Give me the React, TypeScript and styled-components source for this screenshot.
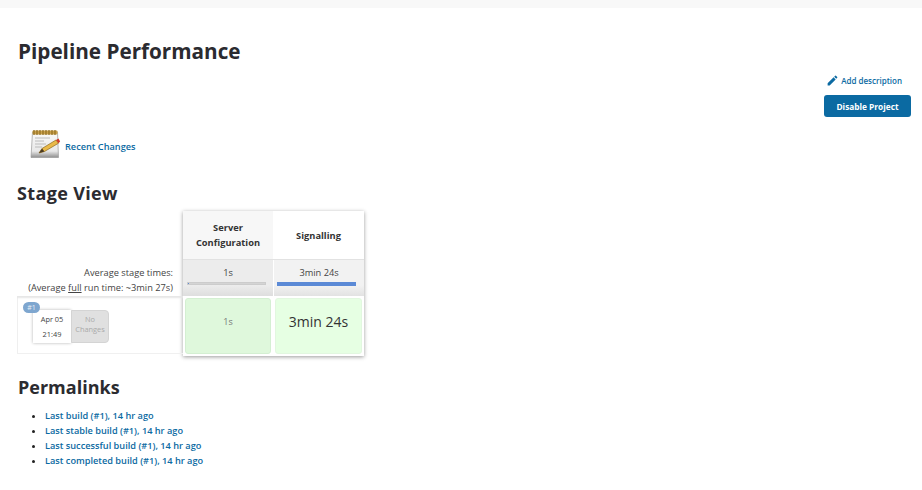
import styled, { createGlobalStyle } from "styled-components";

const Global = createGlobalStyle`
  html, body {
    margin: 0;
    padding: 0;
    background: #fff;
  }
  body {
    font-family: "Open Sans", "Noto Sans", "Liberation Sans", sans-serif;
    color: #333;
    height: 490px;
    overflow: hidden;
  }
`;

// <styled>
const TopBar = styled.div`
  height: 8px;
  background: #f8f8f8;
`;

const Page = styled.div`
  padding: 0 11px 0 18px;
`;

const Title = styled.h1`
  margin: 0;
  padding-top: 28px;
  height: 30px;
  line-height: 30px;
  font-size: 20.7px;
  font-weight: 700;
  color: #2b2b30;
`;

const Actions = styled.div`
  display: flex;
  flex-direction: column;
  align-items: flex-end;
  margin-top: 4px;
`;

const AddLink = styled.a`
  display: flex;
  align-items: center;
  gap: 2px;
  height: 20px;
  margin-right: 9px;
  font-size: 8px;
  font-weight: 600;
  color: #0b6aa2;
`;

const DisableButton = styled.button`
  width: 87px;
  height: 22px;
  margin-top: 5px;
  padding: 0;
  border: 0;
  border-radius: 3px;
  background: #0b6aa2;
  color: #fff;
  font-family: inherit;
  font-size: 8.3px;
  font-weight: 700;
`;

const RecentRow = styled.div`
  display: flex;
  align-items: center;
  gap: 1px;
  margin: 12px 0 0 12px;
  height: 34px;
`;

const BlueLink = styled.a`
  font-size: 9.2px;
  font-weight: 600;
  color: #0b6aa2;
`;

const SectionTitle = styled.h2`
  margin: 0;
  height: 26px;
  line-height: 26px;
  font-size: 18px;
  font-weight: 700;
  color: #2b2b30;
`;

const StageTitle = styled(SectionTitle)`
  margin: 17px 0 0 -1px;
  letter-spacing: 0.35px;
`;

const Stage = styled.div`
  display: flex;
  margin: 5px 0 0 -1px;
`;

const LeftCol = styled.div`
  width: 166px;
  display: flex;
  flex-direction: column;
`;

const AverageLabel = styled.div`
  margin-top: 54px;
  height: 30px;
  padding-right: 10px;
  text-align: right;
  font-size: 9.25px;
  line-height: 15px;
  color: #444;
  white-space: nowrap;
  u {
    text-decoration: underline;
  }
`;

const BuildRow = styled.div`
  position: relative;
  height: 58px;
  margin-top: 1px;
  border-bottom: 1px solid #f0f0f0;
  background: linear-gradient(to right, #f0f0f0 1px, transparent 1px);
  box-shadow: inset 0 3px 2px -1px #e6e6e6;
  display: flex;
  align-items: flex-start;
  padding: 14px 0 0 16px;
  box-sizing: border-box;
`;

const BuildBadge = styled.span`
  position: absolute;
  left: 6px;
  top: 6px;
  width: 17px;
  height: 11px;
  border-radius: 6px;
  background: #7ea6cf;
  color: #e8eef5;
  font-size: 7px;
  line-height: 11px;
  text-align: center;
`;

const DateCard = styled.div`
  width: 38px;
  height: 33px;
  background: #fff;
  box-shadow: 0 0 3px rgba(0, 0, 0, 0.3);
  font-size: 7.4px;
  line-height: 15px;
  text-align: center;
  color: #444;
  padding-top: 2px;
  box-sizing: border-box;
`;

const NoChanges = styled.div`
  width: 38px;
  height: 33px;
  background: #e0e0e0;
  border: 1px solid #d4d4d4;
  border-radius: 0 4px 4px 0;
  box-sizing: border-box;
  font-size: 7.4px;
  line-height: 10px;
  text-align: center;
  color: #aaa;
  padding-top: 3px;
`;

const Panel = styled.div`
  width: 181px;
  display: grid;
  grid-template-columns: 90px 91px;
  grid-template-rows: 49px 36px 60px;
  background: #fff;
  box-shadow: 0 1px 4px rgba(0, 0, 0, 0.4);
`;

const HeadCell = styled.div<{ $tint?: boolean }>`
  display: flex;
  align-items: center;
  justify-content: center;
  text-align: center;
  font-size: 9.3px;
  font-weight: 700;
  line-height: 15px;
  color: #333;
  background: ${(p) => (p.$tint ? "#f7f7f7" : "#fff")};
  border-bottom: 1px solid #e2e2e2;
`;

const AvgCell = styled.div<{ $dark?: boolean }>`
  padding-top: 7px;
  text-align: center;
  font-size: 9.25px;
  line-height: 12px;
  color: #444;
  background: ${(p) =>
    p.$dark
      ? "linear-gradient(#ececec 70%, #dedede)"
      : "linear-gradient(#f2f2f2 70%, #e2e2e2)"};
  border-left: ${(p) => (p.$dark ? "0" : "1px solid #fff")};
`;

const Bar = styled.div`
  height: 3px;
  margin: 3px 7px 0 4px;
  background: #d4d4d4;
  border: 1px solid #ccc;
  box-sizing: border-box;
  overflow: hidden;
`;

const BarFill = styled.div`
  height: 100%;
  background: #5b8ad6;
`;

const BarLarge = styled(Bar)`
  height: 4px;
  margin: 3px 8px 0 3px;
  border: 0;
`;

const TimeCell = styled.div<{ $big?: boolean }>`
  display: flex;
  align-items: center;
  justify-content: center;
  margin: 2px;
  padding-bottom: 10px;
  box-sizing: border-box;
  border-radius: 3px;
  border: 1px solid ${(p) => (p.$big ? "#e2f7e0" : "#d4efd2")};
  background: ${(p) => (p.$big ? "#e6ffe3" : "#dff8dc")};
  color: ${(p) => (p.$big ? "#333" : "#777")};
  font-size: ${(p) => (p.$big ? "14px" : "9px")};
`;

const PermaTitle = styled(SectionTitle)`
  margin: 18px 0 0;
`;

const PermaList = styled.ul`
  margin: 8px 0 0;
  padding: 0 0 0 27px;
  font-size: 9.2px;
  line-height: 15px;
  li {
    color: #222;
  }
`;
// </styled>

const links = [
  "Last build (#1), 14 hr ago",
  "Last stable build (#1), 14 hr ago",
  "Last successful build (#1), 14 hr ago",
  "Last completed build (#1), 14 hr ago",
];

function PencilIcon() {
  return (
    <svg width="13" height="13" viewBox="0 0 24 24" fill="#0b6aa2">
      <path d="M3 17.25V21h3.75L17.81 9.94l-3.75-3.75L3 17.25zM20.71 7.04a1 1 0 0 0 0-1.41l-2.34-2.34a1 1 0 0 0-1.41 0l-1.83 1.83 3.75 3.75 1.83-1.83z" />
    </svg>
  );
}

function NotepadIcon() {
  return (
    <svg width="34" height="34" viewBox="0 0 34 34">
      <defs>
        <linearGradient id="pad" x1="0" y1="0" x2="0" y2="1">
          <stop offset="0" stopColor="#fafafa" />
          <stop offset="0.75" stopColor="#e8e8e8" />
          <stop offset="1" stopColor="#8f8f8f" />
        </linearGradient>
      </defs>
      <path d="M2.5 3h25l1 25.5H1z" fill="url(#pad)" stroke="#9a9a9a" strokeWidth="0.7" />
      <rect x="2.5" y="1.5" width="25" height="4" rx="1" fill="#c9a04a" />
      <path d="M4 1v5M7 1v5M10 1v5M13 1v5M16 1v5M19 1v5M22 1v5M25 1v5" stroke="#8a6a20" strokeWidth="1.1" />
      <path d="M5 9h15M5 12h9M5 15h11M5 18h7" stroke="#b5b5b5" strokeWidth="0.9" />
      <path d="M9 24l3-4.5L26 11l2.5 3.2-14 8.3z" fill="#e9b949" stroke="#8e6a1e" strokeWidth="0.7" />
      <path d="M9 24l3-4.5 2.5 3z" fill="#4a3a22" />
      <path d="M26 11l2.5-1.4 1.6 3-1.6 1.6z" fill="#d23b2a" />
    </svg>
  );
}

function App() {
  return (
    <>
      <Global />
      <TopBar />
      <Page>
        <Title>Pipeline Performance</Title>
        <Actions>
          <AddLink>
            <PencilIcon />
            Add description
          </AddLink>
          <DisableButton>Disable Project</DisableButton>
        </Actions>
        <RecentRow>
          <NotepadIcon />
          <BlueLink>Recent Changes</BlueLink>
        </RecentRow>
        <StageTitle>Stage View</StageTitle>
        <Stage>
          <LeftCol>
            <AverageLabel>
              Average stage times:
              <br />
              (Average <u>full</u> run time: ~3min 27s)
            </AverageLabel>
            <BuildRow>
              <BuildBadge>#1</BuildBadge>
              <DateCard>
                Apr 05
                <br />
                21:49
              </DateCard>
              <NoChanges>
                No
                <br />
                Changes
              </NoChanges>
            </BuildRow>
          </LeftCol>
          <Panel>
            <HeadCell $tint>
              Server
              <br />
              Configuration
            </HeadCell>
            <HeadCell>Signalling</HeadCell>
            <AvgCell $dark>
              1s
              <Bar>
                <BarFill style={{ width: "1%" }} />
              </Bar>
            </AvgCell>
            <AvgCell>
              3min 24s
              <BarLarge>
                <BarFill style={{ width: "100%" }} />
              </BarLarge>
            </AvgCell>
            <TimeCell>1s</TimeCell>
            <TimeCell $big>3min 24s</TimeCell>
          </Panel>
        </Stage>
        <PermaTitle>Permalinks</PermaTitle>
        <PermaList>
          {links.map((l) => (
            <li key={l}>
              <BlueLink>{l}</BlueLink>
            </li>
          ))}
        </PermaList>
      </Page>
    </>
  );
}

export default App;
